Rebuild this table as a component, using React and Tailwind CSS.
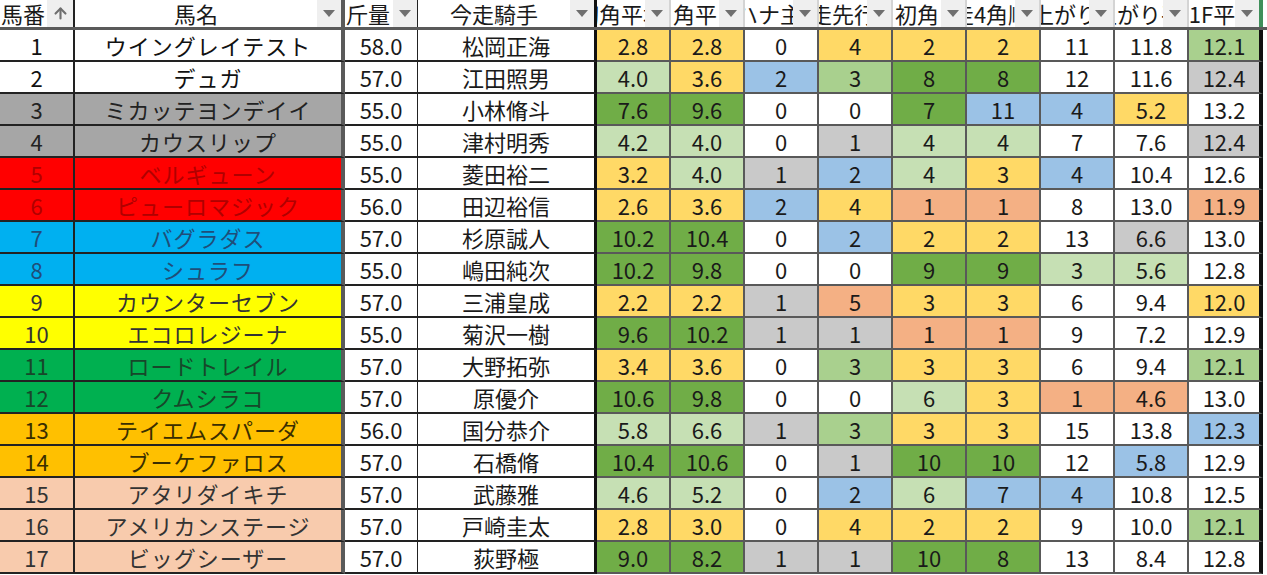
import React from 'react'
import { ArrowUp } from 'lucide-react'

const CELL = {
  Y: 'bg-[#ffd966]',
  L: 'bg-[#c6e0b4]',
  M: 'bg-[#a9d08e]',
  D: 'bg-[#70ad47]',
  B: 'bg-[#9bc2e6]',
  G: 'bg-[#c9c9c9]',
  S: 'bg-[#f4b084]',
  W: 'bg-white',
}

const NAME = {
  white:  'bg-white text-[#111]',
  gray:   'bg-[#a6a6a6] text-[#222]',
  red:    'bg-[#ff0000] text-[#b00000]',
  blue:   'bg-[#00b0f0] text-[#1f4e79]',
  yellow: 'bg-[#ffff00] text-[#333]',
  green:  'bg-[#00b050] text-[#17472a]',
  orange: 'bg-[#ffc000] text-[#3a2e00]',
  pink:   'bg-[#f8cbad] text-[#333]',
}

// 数値セル: "値:色"
const ROWS = [
  [1, 'ウイングレイテスト', 'white', '58.0', '松岡正海', '2.8:Y 2.8:Y 0:W 4:Y 2:Y 2:Y 11:W 11.8:W 12.1:M'],
  [2, 'デュガ', 'white', '57.0', '江田照男', '4.0:L 3.6:Y 2:B 3:M 8:D 8:D 12:W 11.6:W 12.4:G'],
  [3, 'ミカッテヨンデイイ', 'gray', '55.0', '小林脩斗', '7.6:D 9.6:D 0:W 0:W 7:D 11:B 4:B 5.2:Y 13.2:W'],
  [4, 'カウスリップ', 'gray', '55.0', '津村明秀', '4.2:L 4.0:L 0:W 1:G 4:L 4:L 7:W 7.6:W 12.4:G'],
  [5, 'ベルギューン', 'red', '55.0', '菱田裕二', '3.2:Y 4.0:L 1:G 2:B 4:L 3:Y 4:B 10.4:W 12.6:W'],
  [6, 'ピューロマジック', 'red', '56.0', '田辺裕信', '2.6:Y 3.6:Y 2:B 4:Y 1:S 1:S 8:W 13.0:W 11.9:S'],
  [7, 'バグラダス', 'blue', '57.0', '杉原誠人', '10.2:D 10.4:D 0:W 2:B 2:Y 2:Y 13:W 6.6:G 13.0:W'],
  [8, 'シュラフ', 'blue', '55.0', '嶋田純次', '10.2:D 9.8:D 0:W 0:W 9:D 9:D 3:L 5.6:L 12.8:W'],
  [9, 'カウンターセブン', 'yellow', '57.0', '三浦皇成', '2.2:Y 2.2:Y 1:G 5:S 3:Y 3:Y 6:W 9.4:W 12.0:Y'],
  [10, 'エコロレジーナ', 'yellow', '55.0', '菊沢一樹', '9.6:D 10.2:D 1:G 1:G 1:S 1:S 9:W 7.2:W 12.9:W'],
  [11, 'ロードトレイル', 'green', '57.0', '大野拓弥', '3.4:Y 3.6:Y 0:W 3:M 3:Y 3:Y 6:W 9.4:W 12.1:M'],
  [12, 'クムシラコ', 'green', '57.0', '原優介', '10.6:D 9.8:D 0:W 0:W 6:L 3:Y 1:S 4.6:S 13.0:W'],
  [13, 'テイエムスパーダ', 'orange', '56.0', '国分恭介', '5.8:L 6.6:L 1:G 3:M 3:Y 3:Y 15:W 13.8:W 12.3:B'],
  [14, 'ブーケファロス', 'orange', '57.0', '石橋脩', '10.4:D 10.6:D 0:W 1:G 10:D 10:D 12:W 5.8:B 12.9:W'],
  [15, 'アタリダイキチ', 'pink', '57.0', '武藤雅', '4.6:L 5.2:L 0:W 2:B 6:L 7:B 4:B 10.8:W 12.5:W'],
  [16, 'アメリカンステージ', 'pink', '57.0', '戸崎圭太', '2.8:Y 3.0:Y 0:W 4:Y 2:Y 2:Y 9:W 10.0:W 12.1:M'],
  [17, 'ビッグシーザー', 'pink', '57.0', '荻野極', '9.0:D 8.2:D 1:G 1:G 10:D 8:D 13:W 8.4:W 12.8:W'],
]

const DATA_HEADS = ['初角平均', '角平', 'ハナ主', '走先行', '初角', '走4角順', '上がり', '上がり平', '1F平']

function Drop() {
  return (
    <div className="w-[24px] h-full shrink-0 bg-[#efefef] flex items-center justify-center">
      <div className="w-0 h-0 border-l-[6px] border-r-[6px] border-t-[7px] border-l-transparent border-r-transparent border-t-[#6f6f6f]" />
    </div>
  )
}

function Head({ className, children, left }) {
  return (
    <div className={`h-full flex items-stretch ${className}`}>
      <div className={`flex-1 min-w-0 flex items-center overflow-hidden whitespace-nowrap leading-[27px] ${left ? 'justify-start pl-[1px]' : 'justify-center'}`}>
        {children}
      </div>
      <Drop />
    </div>
  )
}

export default function App() {
  return (
    <div className="w-[1267px] h-[575px] overflow-hidden bg-white text-[22px] leading-none text-[#1a1a1a]"
      style={{ fontFamily: '"Noto Sans CJK JP", "Noto Sans", sans-serif' }}>
      {/* header */}
      <div className="flex h-[30px] border-b-[3px] border-[#5a5a5a]">
        <div className="w-[75px] h-full flex items-stretch border-r-2 border-[#222]">
          <div className="flex-1 flex items-center pl-[1px] whitespace-nowrap leading-[27px]">馬番</div>
          <div className="w-[26px] h-full bg-[#efefef] flex items-center justify-center">
            <ArrowUp size={17} strokeWidth={3} color="#6f6f6f" />
          </div>
        </div>
        <Head className="w-[270px] border-r-4 border-[#5a5a5a]">馬名</Head>
        <Head className="w-[73px] border-r border-[#222]" left>斤量</Head>
        <Head className="w-[179px] border-r-[3px] border-[#111]">今走騎手</Head>
        {DATA_HEADS.map((h, i) => (
          <Head key={h}
            className={i === 8 ? 'w-[74px] border-r-4 border-[#3f8f5a]' : 'w-[74px] border-r-2 border-[#d4d4d4]'}>
            {h}
          </Head>
        ))}
      </div>

      {ROWS.map(([no, name, color, kin, jockey, vals]) => (
        <div key={no} className="flex h-[32px]">
          <div className={`w-[75px] flex items-center justify-center border-b-2 border-r-2 border-[#222] ${NAME[color]}`}>{no}</div>
          <div className={`w-[270px] flex items-center justify-center tracking-[1px] whitespace-nowrap border-b-2 border-[#222] border-r-4 border-r-[#5a5a5a] ${NAME[color]}`}>{name}</div>
          <div className="w-[73px] flex items-center justify-center border-b-2 border-[#222] border-r">{kin}</div>
          <div className="w-[179px] flex items-center justify-center border-b-2 border-[#222] border-r-[3px] border-r-[#111]">{jockey}</div>
          {vals.split(' ').map((v, i) => {
            const [val, c] = v.split(':')
            return (
              <div key={i}
                className={`w-[74px] flex items-center justify-center border-b-2 border-[#595959] ${i === 8 ? 'border-r-4 border-r-[#111]' : 'border-r-2'} ${CELL[c]}`}>
                {val}
              </div>
            )
          })}
        </div>
      ))}
    </div>
  )
}
